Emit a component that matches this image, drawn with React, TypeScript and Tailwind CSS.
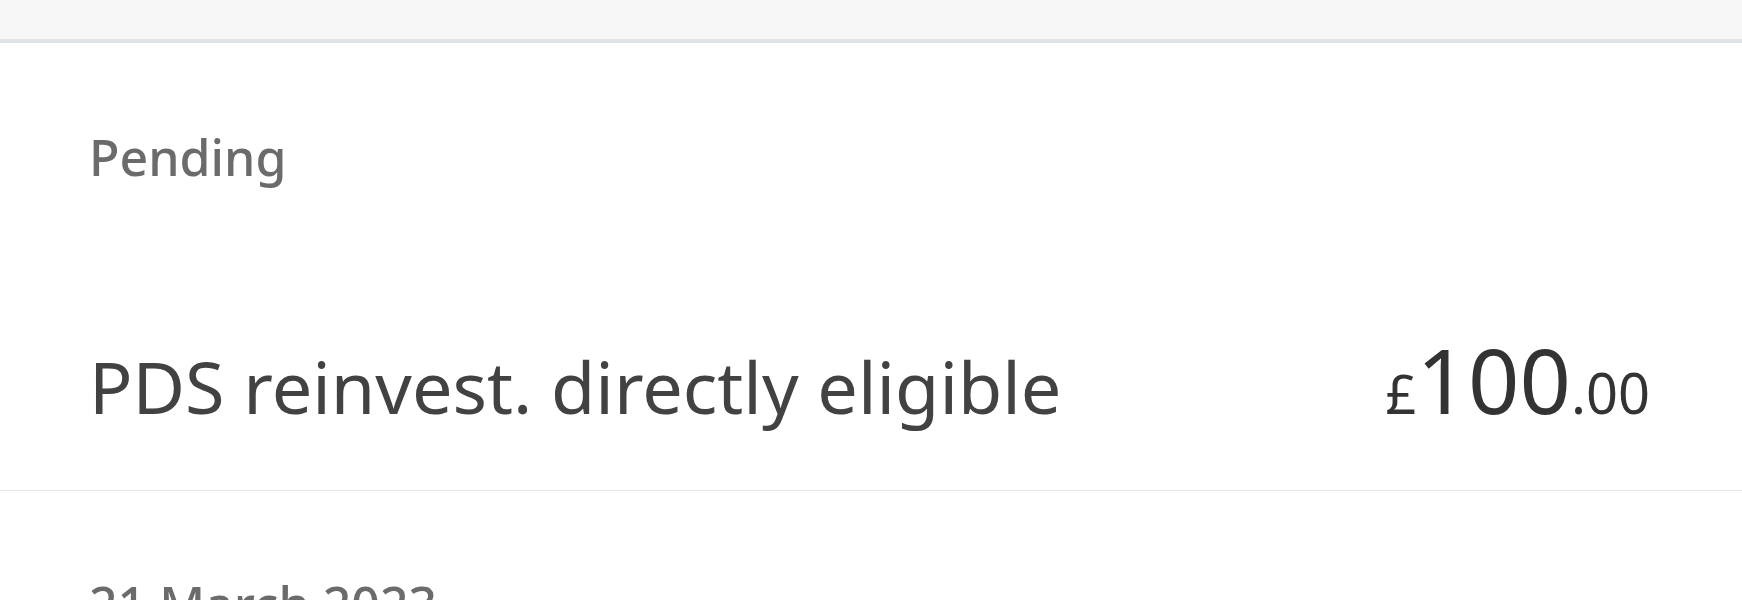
import React from 'react';

interface Transaction {
  id: string;
  description: string;
  pounds: string;
  pence: string;
}

interface TransactionGroupProps {
  title: string;
  transactions: Transaction[];
}

const TransactionGroup: React.FC<TransactionGroupProps> = ({ title, transactions }) => {
  return (
    <section>
      <h2 className="px-[89px] pt-[88px] text-[50px] leading-[53px] font-medium text-[#6b6b6b]">
        {title}
      </h2>
      <ul className="mt-[150px]">
        {transactions.map((t) => (
          <li
            key={t.id}
            className="flex items-baseline justify-between pl-[89px] pr-[92px] pb-[66px] border-b border-[#e3e8ee]"
          >
            <span className="text-[72px] leading-[74px] text-[#424242]">{t.description}</span>
            <span className="text-[#333333] leading-none whitespace-nowrap">
              <span className="text-[54px]">£</span>
              <span className="text-[90px]">{t.pounds}</span>
              <span className="text-[56px]">.{t.pence}</span>
            </span>
          </li>
        ))}
      </ul>
    </section>
  );
};

export default function App() {
  const pending: Transaction[] = [
    { id: 'pds-1', description: 'PDS reinvest. directly eligible', pounds: '100', pence: '00' },
  ];

  return (
    <div className="min-h-[600px] bg-white overflow-hidden" style={{ fontFamily: '"Noto Sans", sans-serif' }}>
      <div className="h-[43px] bg-[#f7f7f7] border-b-4 border-[#dfe3e8]" />
      <TransactionGroup title="Pending" transactions={pending} />
      <h2 className="px-[89px] pt-[87px] text-[50px] leading-[53px] font-medium text-[#6b6b6b]">
        21 March 2023
      </h2>
    </div>
  );
}
